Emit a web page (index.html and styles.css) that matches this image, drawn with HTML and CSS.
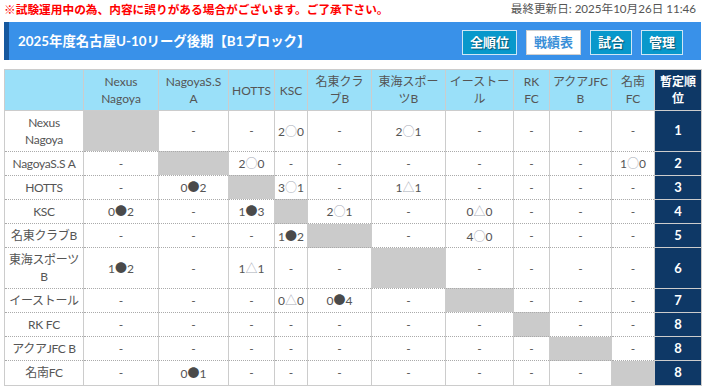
FILE: index.html
```html
<!DOCTYPE html>
<html lang="ja">
<head>
<meta charset="utf-8">
<title>2025年度名古屋U-10リーグ後期【B1ブロック】 戦績表</title>
<link rel="stylesheet" href="styles.css">
</head>
<body>
<div class="page">
  <div class="topline">
    <p class="notice">※試験運用中の為、内容に誤りがある場合がございます。ご了承下さい。</p>
    <p class="updated">最終更新日: 2025年10月26日 11:46</p>
  </div>
  <div class="titlebar">
    <h1 class="title">2025年度名古屋U-10リーグ後期【B1ブロック】</h1>
    <nav class="nav">
      <a class="btn">全順位</a>
      <a class="btn active">戦績表</a>
      <a class="btn">試合</a>
      <a class="btn">管理</a>
    </nav>
  </div>
  <table class="grid">
    <colgroup>
      <col class="c-label"><col class="c1"><col class="c2"><col class="c3"><col class="c4"><col class="c5"><col class="c6"><col class="c7"><col class="c8"><col class="c9"><col class="c10"><col class="c-rank">
    </colgroup>
    <thead>
      <tr>
        <th></th>
        <th>Nexus<br>Nagoya</th>
        <th>NagoyaS.S<br>A</th>
        <th>HOTTS</th>
        <th>KSC</th>
        <th>名東クラ<br>ブB</th>
        <th>東海スポー<br>ツB</th>
        <th>イーストー<br>ル</th>
        <th>RK<br>FC</th>
        <th>アクアJFC<br>B</th>
        <th>名南<br>FC</th>
        <th class="rank-h">暫定順<br>位</th>
      </tr>
    </thead>
    <tbody>
      <tr class="tall">
        <td class="label">Nexus<br>Nagoya</td>
        <td class="self"></td><td>-</td><td>-</td>
        <td>2<span class="win">○</span>0</td><td>-</td>
        <td>2<span class="win">○</span>1</td><td>-</td><td>-</td><td>-</td><td>-</td>
        <td class="rank">1</td>
      </tr>
      <tr>
        <td class="label">NagoyaS.S A</td>
        <td>-</td><td class="self"></td>
        <td>2<span class="win">○</span>0</td><td>-</td><td>-</td><td>-</td><td>-</td><td>-</td><td>-</td>
        <td>1<span class="win">○</span>0</td>
        <td class="rank">2</td>
      </tr>
      <tr>
        <td class="label">HOTTS</td>
        <td>-</td><td>0<span class="lose">●</span>2</td><td class="self"></td>
        <td>3<span class="win">○</span>1</td><td>-</td>
        <td>1<span class="draw">△</span>1</td><td>-</td><td>-</td><td>-</td><td>-</td>
        <td class="rank">3</td>
      </tr>
      <tr>
        <td class="label">KSC</td>
        <td>0<span class="lose">●</span>2</td><td>-</td>
        <td>1<span class="lose">●</span>3</td><td class="self"></td>
        <td>2<span class="win">○</span>1</td><td>-</td>
        <td>0<span class="draw">△</span>0</td><td>-</td><td>-</td><td>-</td>
        <td class="rank">4</td>
      </tr>
      <tr>
        <td class="label">名東クラブB</td>
        <td>-</td><td>-</td><td>-</td>
        <td>1<span class="lose">●</span>2</td><td class="self"></td><td>-</td>
        <td>4<span class="win">○</span>0</td><td>-</td><td>-</td><td>-</td>
        <td class="rank">5</td>
      </tr>
      <tr class="tall">
        <td class="label">東海スポーツ<br>B</td>
        <td>1<span class="lose">●</span>2</td><td>-</td>
        <td>1<span class="draw">△</span>1</td><td>-</td><td>-</td><td class="self"></td>
        <td>-</td><td>-</td><td>-</td><td>-</td>
        <td class="rank">6</td>
      </tr>
      <tr>
        <td class="label">イーストール</td>
        <td>-</td><td>-</td><td>-</td>
        <td>0<span class="draw">△</span>0</td>
        <td>0<span class="lose">●</span>4</td><td>-</td><td class="self"></td>
        <td>-</td><td>-</td><td>-</td>
        <td class="rank">7</td>
      </tr>
      <tr>
        <td class="label">RK FC</td>
        <td>-</td><td>-</td><td>-</td><td>-</td><td>-</td><td>-</td><td>-</td><td class="self"></td><td>-</td><td>-</td>
        <td class="rank">8</td>
      </tr>
      <tr>
        <td class="label">アクアJFC B</td>
        <td>-</td><td>-</td><td>-</td><td>-</td><td>-</td><td>-</td><td>-</td><td>-</td><td class="self"></td><td>-</td>
        <td class="rank">8</td>
      </tr>
      <tr>
        <td class="label">名南FC</td>
        <td>-</td><td>0<span class="lose">●</span>1</td><td>-</td><td>-</td><td>-</td><td>-</td><td>-</td><td>-</td><td>-</td><td class="self"></td>
        <td class="rank">8</td>
      </tr>
    </tbody>
  </table>
</div>
</body>
</html>
```

FILE: styles.css
```css
* { box-sizing: border-box; }

html, body {
  margin: 0;
  padding: 0;
  background: #fff;
}

body {
  font-family: Lato, "Noto Sans CJK JP", sans-serif;
  font-size: 12px;
  color: #555;
}

.page {
  padding: 0 5px 0 4px;
}

.topline {
  display: flex;
  justify-content: space-between;
  align-items: center;
  height: 18px;
  margin-bottom: 4px;
}

.notice {
  margin: 0;
  color: #f00;
  font-weight: bold;
  font-size: 11.7px;
  line-height: 18px;
}

.updated {
  margin: 0 5px 0 0;
  color: #555;
  font-size: 11.6px;
  line-height: 18px;
}

.titlebar {
  display: flex;
  align-items: center;
  justify-content: space-between;
  height: 38px;
  background: #3991e9;
  border-left: 5px solid #15589f;
  padding: 0 18px 0 9px;
  margin-bottom: 9px;
}

.title {
  margin: 0;
  color: #fff;
  font-size: 13.4px;
  font-weight: bold;
  line-height: 18px;
}

.nav {
  display: flex;
  gap: 9px;
  padding-top: 3px;
}

.btn {
  display: block;
  height: 25px;
  padding: 0 7px;
  border: 1px solid #cfe6f5;
  background: #0898cb;
  color: #fff;
  font-size: 13px;
  font-weight: bold;
  line-height: 23px;
  text-shadow: 1px 1px 1px rgba(0, 0, 0, 0.45);
}

.btn.active {
  background: #fff;
  color: #3a8fd8;
  border-color: #d0d0d0;
  text-shadow: none;
}

.grid {
  width: 697px;
  table-layout: fixed;
  border-collapse: collapse;
  border: 1px solid #ccc;
  text-align: center;
}

.c-label { width: 79px; }
.c1 { width: 75px; }
.c2 { width: 70px; }
.c3 { width: 46px; }
.c4 { width: 33px; }
.c5 { width: 64px; }
.c6 { width: 74px; }
.c7 { width: 68px; }
.c8 { width: 36px; }
.c9 { width: 62px; }
.c10 { width: 43px; }
.c-rank { width: 47px; }

.grid th {
  height: 41px;
  padding: 3px 2px;
  background: #9ae0f9;
  color: #555;
  font-weight: normal;
  font-size: 12px;
  line-height: 17px;
  border: 1px solid #ccc;
}

.grid th.rank-h {
  background: #0e3866;
  color: #fff;
  font-weight: bold;
}

.grid td {
  height: 24.2px;
  padding: 2px 2px;
  line-height: 17px;
  font-size: 12px;
  color: #555;
  border-left: 1px solid #ccc;
  border-right: 1px solid #ccc;
  border-top: 1px dotted #aaa;
  border-bottom: 1px dotted #aaa;
  white-space: nowrap;
}

.grid tr.tall td {
  height: 40.5px;
}

.grid td.label {
  white-space: normal;
  letter-spacing: -0.3px;
}

.grid td.self {
  background: #cbcbcb;
}

.grid td.rank {
  background: #0e3866;
  color: #fff;
  font-weight: bold;
  font-size: 13px;
  border-top: 1px solid #ccc;
  border-bottom: 1px solid #ccc;
}

.win,
.lose,
.draw {
  font-family: "Noto Sans CJK JP", sans-serif;
  font-size: 12px;
}

.win { color: #a9adb8; }
.lose { color: #4a4a4a; }
.draw { color: #a9adb8; }
```
